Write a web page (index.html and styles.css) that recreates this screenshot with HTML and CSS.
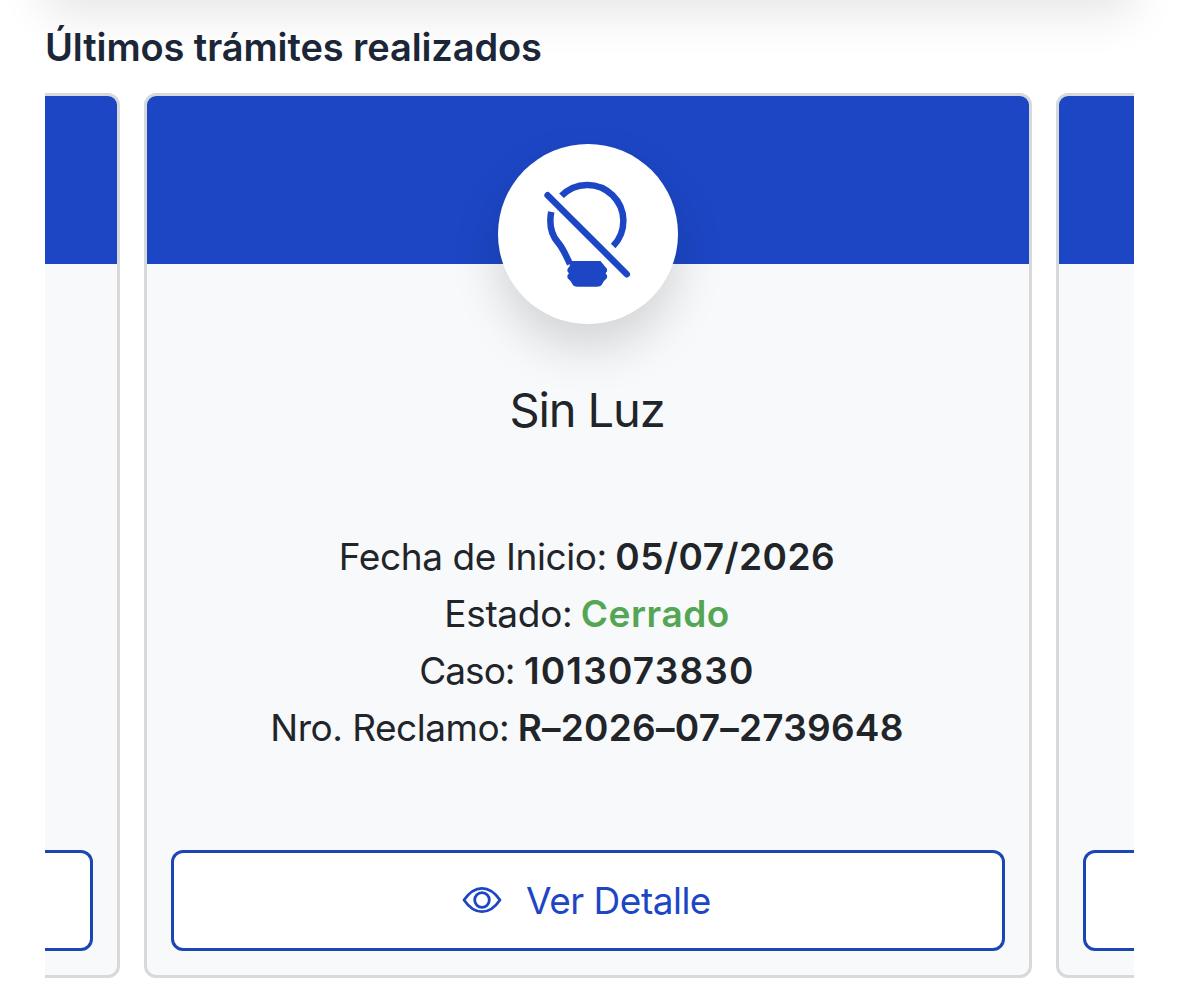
FILE: index.html
```
<!DOCTYPE html>
<html lang="es">
<head>
    <meta charset="UTF-8">
    <title>Últimos trámites realizados</title>
    <link rel="stylesheet" href="styles.css">
</head>
<body>
    <div class="top-panel"></div>
    <section class="tramites">
        <h2 class="section-title">Últimos trámites realizados</h2>
        <div class="carousel">
            <div class="card">
                <div class="card-header"></div>
                <div class="card-body"></div>
                <div class="card-footer"><button class="btn-detail" type="button"></button></div>
            </div>
            <div class="card">
                <div class="card-header">
                    <div class="card-icon">
                        <svg width="90" height="110" viewBox="0 0 90 110" fill="none" stroke="#1c46c4" stroke-width="6.5">
                            <path d="M18.5 16.8A36 36 0 0 1 70.2 67"/>
                            <path d="M8.2 32.8C6 45 8 55.5 15 63.5C20 69 22.5 76 27 85"/>
                            <path d="M4.6 16.2L83.8 95.2" stroke-linecap="round"/>
                            <path d="M27 82H57.5L62 87.5Q66.2 91 62.5 94.3Q66.2 98 62 101Q60.5 102 59.5 104.5Q58 107.8 54 107.8H34.5Q30.5 107.8 29 104.5Q28 102 26.5 101Q22.3 98 26 94.3Q22.3 91 26.5 87.5Z" fill="#1c46c4" stroke="none"/>
                        </svg>
                    </div>
                </div>
                <div class="card-body">
                    <h3 class="card-title">Sin Luz</h3>
                    <ul class="card-data">
                        <li><span class="label-date">Fecha de Inicio:</span> <b class="value-date">05/07/2026</b></li>
                        <li><span class="label-status">Estado:</span> <b class="value-status">Cerrado</b></li>
                        <li><span class="label-case">Caso:</span> <b class="value-case">1013073830</b></li>
                        <li><span class="label-claim">Nro. Reclamo:</span> <b class="value-claim">R–2026–07–2739648</b></li>
                    </ul>
                </div>
                <div class="card-footer">
                    <button class="btn-detail" type="button">
                        <svg width="40" height="30" viewBox="0 0 40 30" fill="none" stroke="#1c46c4" stroke-width="2.8">
                            <path d="M2 14Q10 2.3 20 2.3T38 14Q30 25.7 20 25.7T2 14Z" stroke-linejoin="round"/>
                            <circle cx="20" cy="14" r="7.3"/>
                        </svg>
                        <span>Ver Detalle</span>
                    </button>
                </div>
            </div>
            <div class="card">
                <div class="card-header"></div>
                <div class="card-body"></div>
                <div class="card-footer"><button class="btn-detail" type="button"></button></div>
            </div>
        </div>
    </section>
</body>
</html>
```
FILE: styles.css
```
* {
    box-sizing: border-box;
}

body {
    margin: 0;
    height: 1000px;
    overflow: hidden;
    background: #fff;
    color: #212529;
    font-family: Inter, "Liberation Sans", sans-serif;
}

.top-panel {
    height: 60px;
    margin: -72px 45px 12px;
    border-radius: 12px;
    box-shadow: 0 24px 48px rgba(0, 0, 0, 0.11);
}

.tramites {
    padding: 0 45px;
}

.section-title {
    margin: 0;
    height: 93px;
    line-height: 94px;
    font-size: 38px;
    font-weight: 600;
    letter-spacing: -0.1px;
    color: #1b2738;
    white-space: nowrap;
}

/* neighbouring cards peek in from both sides */
.carousel {
    display: flex;
    justify-content: center;
    gap: 24px;
    overflow: hidden;
    padding-right: 3px;
}

.card {
    display: flex;
    flex-direction: column;
    flex: 0 0 888px;
    height: 885px;
    border: 3px solid #d8d9da;
    border-radius: 12px;
    background: #f8f9fb;
}

.card-header {
    display: flex;
    justify-content: center;
    height: 168px;
    padding-top: 48px;
    border-radius: 9px 9px 0 0;
    background: #1c46c4;
}

.card-icon {
    display: flex;
    flex: 0 0 180px;
    align-items: center;
    justify-content: center;
    height: 180px;
    border-radius: 50%;
    background: #fff;
    box-shadow: 0 24px 48px rgba(0, 0, 0, 0.15);
}

.card-body {
    flex: 1;
    padding-top: 117px;
    text-align: center;
}

.card-title {
    margin: 0 0 89px;
    padding-right: 2px;
    font-size: 47px;
    font-weight: 400;
    line-height: 58px;
    letter-spacing: -1.1px;
}

.card-data {
    margin: 0;
    padding: 0;
    list-style: none;
    font-size: 37px;
    line-height: 57px;
}

.card-data li {
    padding-right: 2px;
}

.card-data b {
    margin-left: -2px;
    font-weight: 600;
    letter-spacing: 0.5px;
}

.label-date {
    letter-spacing: -0.4px;
}

.label-status {
    letter-spacing: -0.3px;
}

.label-case {
    letter-spacing: -1px;
}

.label-claim {
    letter-spacing: -0.5px;
}

.card-data .value-case {
    margin-left: -1px;
    letter-spacing: 1.2px;
}

.card-data .value-claim {
    letter-spacing: 0.25px;
}

.card-data .value-status {
    color: #53a653;
}

.card-footer {
    padding: 0 24px 24px;
}

.btn-detail {
    display: flex;
    align-items: center;
    justify-content: center;
    gap: 24px;
    width: 100%;
    height: 101px;
    padding: 0 9px 0 6px;
    border: 3px solid #1c46b4;
    border-radius: 12px;
    background: #fff;
    color: #1c46c4;
    font-family: inherit;
    font-size: 37px;
    letter-spacing: -0.5px;
}
```
